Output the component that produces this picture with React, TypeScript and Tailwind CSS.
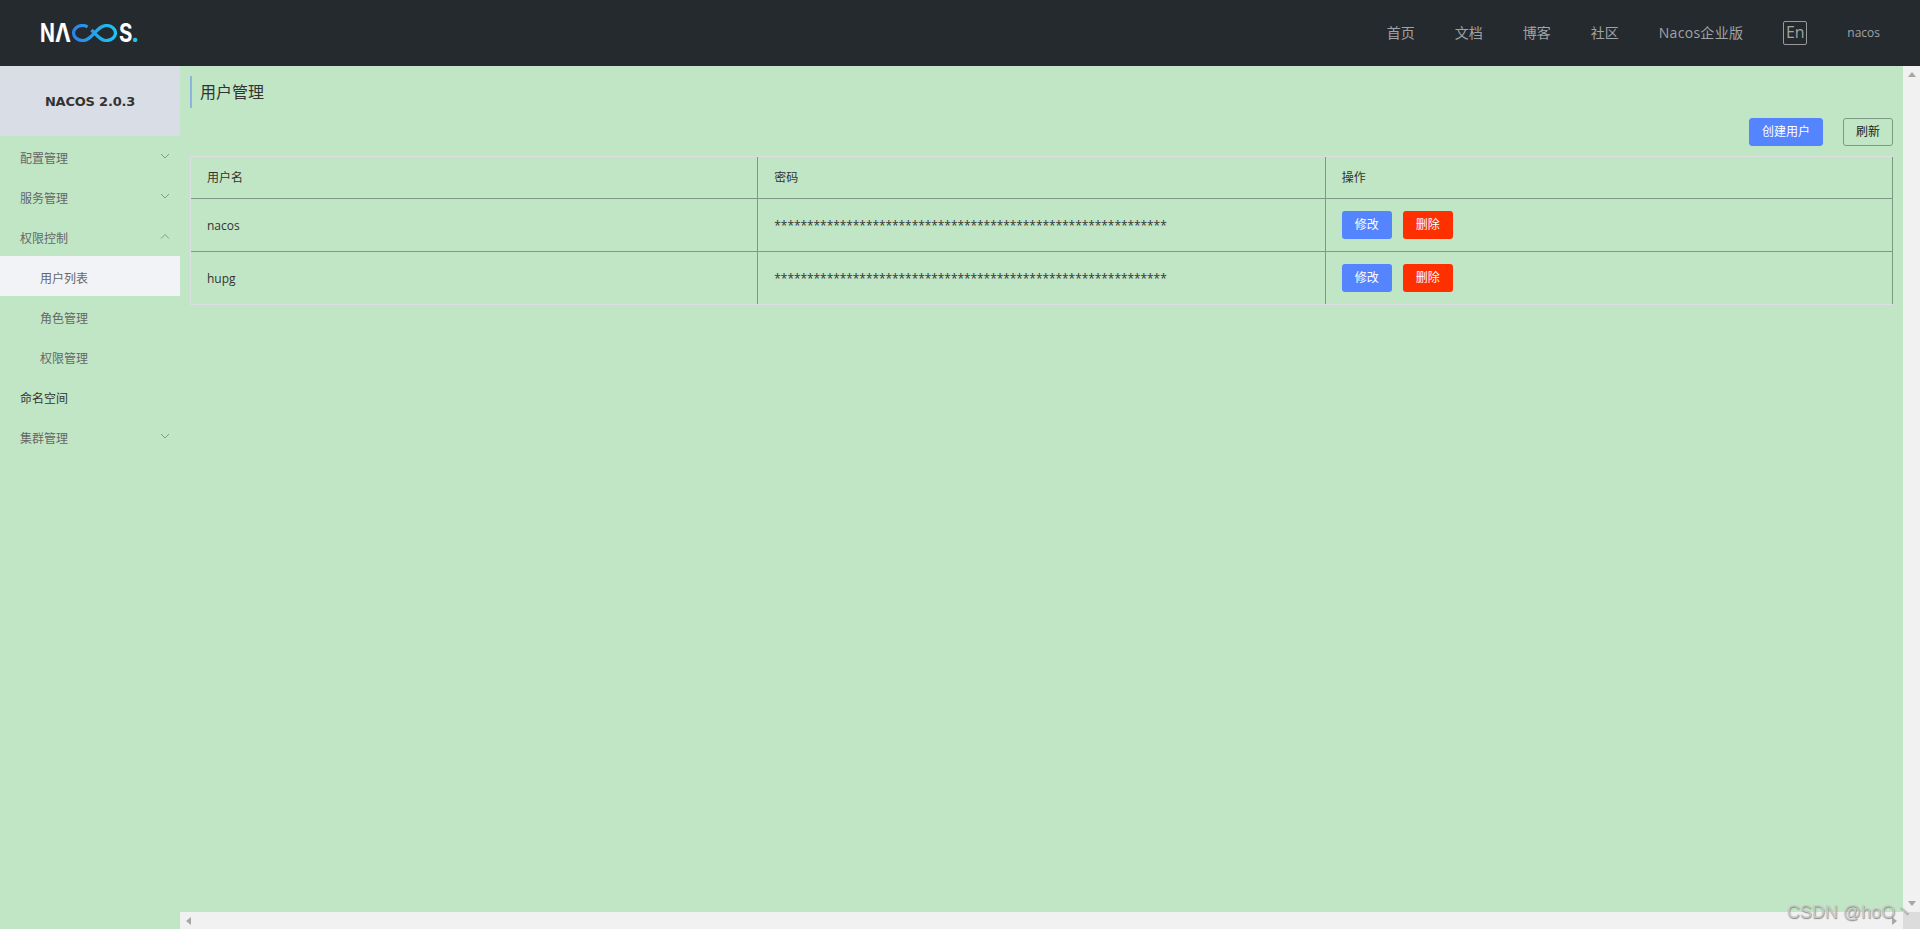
import React from 'react';

const fontStack = "font-['Open_Sans','Noto_Sans_CJK_SC',sans-serif]";

const navItems = ['首页', '文档', '博客', '社区'];

const users = ['nacos', 'hupg'];

const Chevron = ({ up = false }: { up?: boolean }) => (
  <svg width="10" height="6" viewBox="0 0 10 6" fill="none" className="absolute right-[10px] top-[17px]">
    <path d={up ? 'M1 5.5 L5 1.5 L9 5.5' : 'M1 1 L5 5 L9 1'} stroke="#7d9a84" strokeWidth="1" />
  </svg>
);

const Logo = () => (
  <div className="flex items-center font-['Inter',sans-serif] text-[25px] leading-none font-bold text-white">
    <span className="inline-block w-[14px] origin-left scale-x-[0.78]">N</span>
    <span className="inline-block w-[15px] ml-px origin-left scale-x-[0.85]">Λ</span>
    <svg width="45" height="18" viewBox="0 0 45 18" fill="none" className="ml-[2px]">
      <defs>
        <linearGradient id="logoGrad" x1="0" y1="0" x2="45" y2="0" gradientUnits="userSpaceOnUse">
          <stop offset="0" stopColor="#2f7fe8" />
          <stop offset="1" stopColor="#1cc8f0" />
        </linearGradient>
      </defs>
      <path
        d="M15.5 3 C14 2 12.5 1.5 10.5 1.5 C5.5 1.5 1.5 4.8 1.5 9 C1.5 13.2 5.5 16.5 10.5 16.5 C15.5 16.5 18.5 13 22.5 9 C26.5 5 29.5 1.5 34.5 1.5 C39.5 1.5 43.5 4.8 43.5 9 C43.5 13.2 39.5 16.5 34.5 16.5 C29.5 16.5 26.5 13 22.5 9 L19.5 6"
        stroke="url(#logoGrad)"
        strokeWidth="3.2"
      />
    </svg>
    <span className="inline-block w-[13px] ml-[2px] origin-left scale-x-[0.82]">S</span>
    <span className="-ml-px text-[#1cc8f0]">.</span>
  </div>
);

const SideItem = ({
  label,
  sub = false,
  active = false,
  dark = false,
  arrow,
}: {
  label: string;
  sub?: boolean;
  active?: boolean;
  dark?: boolean;
  arrow?: 'up' | 'down';
}) => (
  <div
    className={`relative h-10 pt-[6px] flex items-center text-xs ${sub ? 'pl-10' : 'pl-5'} ${active ? 'bg-[#f2f3f7]' : ''} ${dark ? 'text-[#333333]' : 'text-[#666666]'}`}
  >
    {label}
    {arrow && <Chevron up={arrow === 'up'} />}
  </div>
);

const Triangle = ({ d }: { d: string }) => (
  <svg width="8" height="8" viewBox="0 0 8 8" className="shrink-0">
    <path d={d} fill="#a6a6a6" />
  </svg>
);

const Cell = ({ children, className }: { children: React.ReactNode; className: string }) => (
  <div className={`flex items-center gap-[11px] pl-4 flex-1 border-r border-[#7f9a84] ${className}`}>
    {children}
  </div>
);

export default function App() {
  return (
    <div className={`relative h-[929px] w-[1920px] overflow-hidden flex flex-col bg-[#c1e6c6] ${fontStack}`}>
      {/* Header */}
      <header className="h-[66px] shrink-0 bg-[#252a2f] flex items-center justify-between pl-10 pr-10">
        <Logo />
        <nav className="flex items-center gap-10 text-sm text-[#a0a3a6]">
          {navItems.map((item) => (
            <span key={item}>{item}</span>
          ))}
          <span className="tracking-[0.3px]">Nacos企业版</span>
          <span className="h-6 w-6 border border-[#999999] rounded-[2px] flex justify-center text-base leading-5">En</span>
          <span className="text-xs">nacos</span>
        </nav>
      </header>

      <div className="flex flex-1 min-h-0">
        {/* Sidebar */}
        <aside className="w-[180px] shrink-0">
          <div className="h-[70px] bg-[#d9dee6] flex items-center justify-center pt-[2px] font-['DejaVu_Sans',sans-serif] text-[13px] font-bold tracking-[-0.2px] text-[#333333]">
            NACOS 2.0.3
          </div>
          <SideItem label="配置管理" arrow="down" />
          <SideItem label="服务管理" arrow="down" />
          <SideItem label="权限控制" arrow="up" />
          <SideItem label="用户列表" sub active />
          <SideItem label="角色管理" sub />
          <SideItem label="权限管理" sub />
          <SideItem label="命名空间" dark />
          <SideItem label="集群管理" arrow="down" />
        </aside>

        <div className="flex-1 min-w-0 flex flex-col">
          <div className="flex flex-1 min-h-0">
            {/* Content */}
            <main className="flex-1 min-w-0 pt-[10px] pl-[10px] pr-[10px]">
              <div className="h-8 border-l-2 border-[#8cb4e0] pl-2 flex items-center text-base text-[#333333]">用户管理</div>
              <div className="flex justify-end gap-5 mt-[10px] text-xs">
                <button className="h-7 px-3 rounded-[3px] border border-[#5584ff] bg-[#5584ff] text-white">创建用户</button>
                <button className="h-7 px-3 rounded-[3px] border border-[#7f9a84] text-[#222222]">刷新</button>
              </div>
              <div className="mt-[10px] border border-r-0 border-[#dcdee3] text-xs text-[#333333]">
                <div className="flex border-b border-[#7f9a84]">
                  <Cell className="h-[41px] pt-px">用户名</Cell>
                  <Cell className="h-[41px] pt-px">密码</Cell>
                  <Cell className="h-[41px] pt-px">操作</Cell>
                </div>
                {users.map((name, i) => (
                  <div key={name} className={`flex ${i === 0 ? 'border-b border-[#7f9a84]' : ''}`}>
                    <Cell className="h-[52px] pt-[2px]">{name}</Cell>
                    <Cell className="h-[52px] pt-[2px]">
                      <span className="tracking-[-0.07px]">{'*'.repeat(60)}</span>
                    </Cell>
                    <Cell className="h-[52px]">
                      <button className="h-7 w-[50px] rounded-[3px] bg-[#5584ff] text-white">修改</button>
                      <button className="h-7 w-[50px] rounded-[3px] bg-[#ff3000] text-white">删除</button>
                    </Cell>
                  </div>
                ))}
              </div>
            </main>

            {/* Vertical scrollbar */}
            <div className="w-[17px] shrink-0 bg-[#f1f1f1] flex flex-col items-center justify-between py-[5px]">
              <Triangle d="M4 1 L8 6 L0 6 Z" />
              <Triangle d="M0 2 L8 2 L4 7 Z" />
            </div>
          </div>

          {/* Horizontal scrollbar */}
          <div className="h-[17px] shrink-0 bg-[#f1f1f1] flex">
            <div className="flex-1 flex items-center justify-between px-[5px]">
              <Triangle d="M1 4 L6 0 L6 8 Z" />
              <Triangle d="M2 0 L7 4 L2 8 Z" />
            </div>
            <div className="w-[17px] bg-[#dcdcdc]" />
          </div>
        </div>
      </div>

      {/* CSDN watermark */}
      <div className="absolute left-[1787px] bottom-[7px] whitespace-nowrap font-['Liberation_Sans','Noto_Sans_CJK_SC',sans-serif] text-lg leading-5 text-[#c8c8c8] [text-shadow:0.5px_0.5px_1px_rgba(90,90,90,0.7)]">
        CSDN @hoO丶
      </div>
    </div>
  );
}
